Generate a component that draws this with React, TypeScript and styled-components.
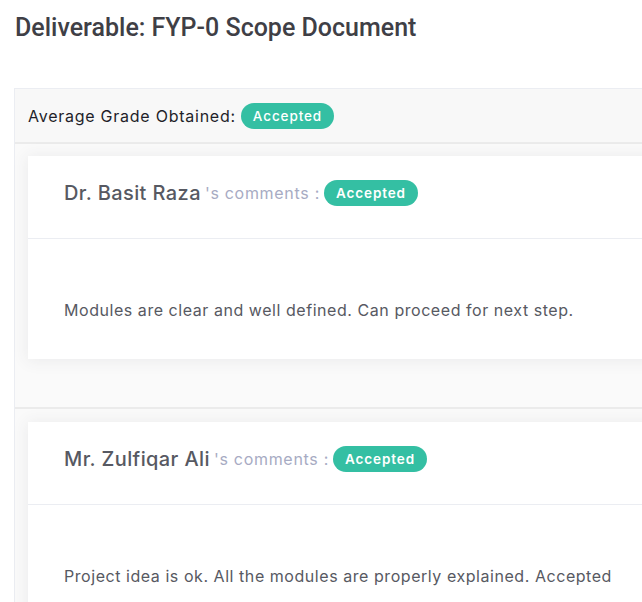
import React from "react";
import styled, { createGlobalStyle } from "styled-components";

const Global = createGlobalStyle`
  html, body { margin: 0; padding: 0; background: #fff; overflow: hidden; }
  body { font-family: Inter, "Open Sans", sans-serif; }
`;

const Page = styled.div`
  padding: 13px 0 0 15px;
  width: 760px;
`;

const Title = styled.h3`
  margin: 0 0 45px 0;
  font-family: Roboto, sans-serif;
  font-weight: 500;
  font-size: 25px;
  line-height: 30px;
  color: #3f3f46;
`;

const Panel = styled.div`
  margin-left: -1px;
  border: 1px solid #ebedf2;
  background: #fafafa;
`;

const PanelHead = styled.div`
  display: flex;
  align-items: center;
  gap: 5px;
  height: 53px;
  padding: 0 13px;
  background: #f8f8f8;
  border-bottom: 2px solid #ebebeb;
  font-size: 16px;
  letter-spacing: 0.75px;
  color: #1f1f2a;
`;

const Badge = styled.span<{ $bold?: boolean }>`
  display: inline-flex;
  align-items: center;
  justify-content: center;
  height: 26px;
  padding: 0 12px;
  border-radius: 13px;
  background: #34bfa3;
  color: #fff;
  font-size: 13.5px;
  font-weight: ${(p) => (p.$bold ? 600 : 500)};
  letter-spacing: 0.9px;
`;

const Item = styled.div`
  padding: 12px 0 48px 13px;
  border-bottom: 2px solid #ebebeb;
  & + & { padding-top: 13px; }
  &:last-child { border-bottom: none; }
`;

const Card = styled.div`
  background: #fff;
  box-shadow: 0 1px 15px 1px rgba(69, 65, 78, 0.08);
`;

const CardHead = styled.div`
  box-sizing: border-box;
  display: flex;
  align-items: center;
  gap: 4px;
  height: 83px;
  padding: 0 36px 8px;
  border-bottom: 1px solid #ebedf2;
`;

const Name = styled.span`
  font-size: 20px;
  font-weight: 500;
  letter-spacing: 0.4px;
  color: #575962;
`;

const Muted = styled.span`
  font-size: 16px;
  letter-spacing: 0.7px;
  color: #a7abc3;
`;

const CardBody = styled.div`
  padding: 60px 36px 38px;
  font-size: 16px;
  line-height: 22px;
  letter-spacing: 0.55px;
  color: #575962;
`;

const reviews = [
  { name: "Dr. Basit Raza", text: "Modules are clear and well defined. Can proceed for next step." },
  { name: "Mr. Zulfiqar Ali", text: "Project idea is ok. All the modules are properly explained. Accepted" },
];

export default function App() {
  return (
    <>
      <Global />
      <Page>
        <Title>Deliverable: FYP-0 Scope Document</Title>
        <Panel>
          <PanelHead>
            <span>Average Grade Obtained:</span>
            <Badge>Accepted</Badge>
          </PanelHead>
          {reviews.map((r) => (
            <Item key={r.name}>
              <Card>
                <CardHead>
                  <Name>{r.name}</Name>
                  <Muted>'s comments :</Muted>
                  <Badge $bold>Accepted</Badge>
                </CardHead>
                <CardBody>{r.text}</CardBody>
              </Card>
            </Item>
          ))}
        </Panel>
      </Page>
    </>
  );
}
